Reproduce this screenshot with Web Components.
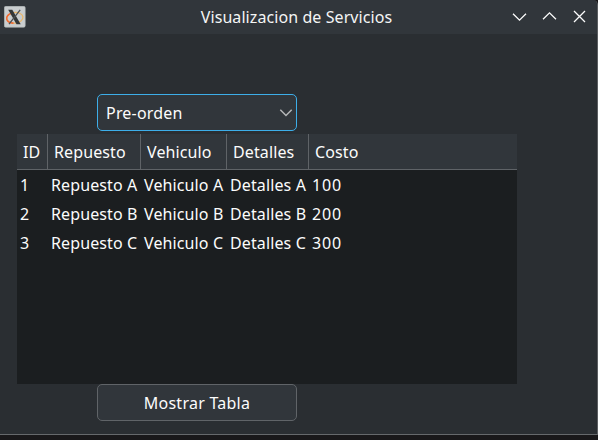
<!DOCTYPE html>
<html lang="es">
<head>
<meta charset="utf-8">
<title>Visualizacion de Servicios</title>
<style>
html, body { margin: 0; height: 100%; overflow: hidden; background: #19181a; }
body { font: 16px/22px "Noto Sans", sans-serif; color: #fcfcfc; }
</style>
</head>
<body>
<app-window>
  <title-bar slot="title">Visualizacion de Servicios</title-bar>
  <combo-box>Pre-orden</combo-box>
  <tree-table></tree-table>
  <push-button>Mostrar Tabla</push-button>
</app-window>
<script>
const define = (name, html) => customElements.define(name, class extends HTMLElement {
  constructor() {
    super();
    this.attachShadow({ mode: 'open' }).innerHTML = html;
  }
});

define('title-bar', `
<style>
:host { display: grid; grid-template-columns: 104px 1fr 104px; align-items: center; height: 34px; background: #31363b; color: #f4f5f5; }
.app { margin-left: 4px; display: block; }
.title { text-align: center; white-space: nowrap; margin-right: 4px; letter-spacing: .08px; }
.buttons { display: flex; justify-content: flex-end; gap: 14px; padding-right: 10px; }
.buttons svg { display: block; fill: none; stroke: #fcfcfc; stroke-width: 1.3; }
</style>
<svg class="app" width="22" height="22" viewBox="0 0 22 22">
  <rect x=".3" y=".3" width="20.9" height="20.9" rx="1.5" fill="#c9cdcf" stroke="#b4b8ba" stroke-width=".6"/>
  <ellipse cx="10.8" cy="11.8" rx="8.200" ry="5.300" fill="none" stroke="#e9b76c" stroke-width="1.3" transform="rotate(-6 10.8 11.8)"/>
  <path d="M8.500 7C4.200 7.900 2 10.600 2.800 13.300C3.600 15.600 6.500 17.200 9.500 17.100" fill="none" stroke="#f06a35" stroke-width="1.600"/>
  <path d="M4.200 3.800H8.300L16.700 18.200H12.500Z" fill="#333739"/>
  <path d="M16.200 3.800L5 18.200" stroke="#4b4f52" stroke-width="1.300"/>
</svg>
<span class="title"><slot></slot></span>
<span class="buttons">
  <svg width="16" height="16"><path d="M2 4.700L8.500 11.200L15 4.700"/></svg>
  <svg width="16" height="16"><path d="M2 10.300L8.500 3.800L15 10.300"/></svg>
  <svg width="16" height="16"><path d="M3 2L14 13M14 2L3 13"/></svg>
</span>`);

define('app-window', `
<style>
:host { display: flex; flex-direction: column; box-sizing: border-box; width: 598px; height: 435px; background: #2a2e32; border-right: 1px solid #5b5e61; border-bottom: 1px solid #66696c; border-top-right-radius: 5px; overflow: hidden; }
.content { display: flex; flex-direction: column; align-items: flex-start; width: 500px; padding: 60px 0 0 17px; }
</style>
<slot name="title"></slot>
<div class="content"><slot></slot></div>`);

define('combo-box', `
<style>
:host { display: flex; align-items: center; justify-content: space-between; box-sizing: border-box; width: 200px; height: 37px; margin: 0 0 3px 80px; padding: 0 3px 0 8px; border: 1px solid #3daee9; border-radius: 5px; background: #31363b; letter-spacing: .2px; }
svg { fill: none; stroke: #b5b7b9; stroke-width: 1.500; }
</style>
<span><slot></slot></span>
<svg width="14" height="14"><path d="M1.300 3.800L7 9.500L12.700 3.800"/></svg>`);

define('push-button', `
<style>
:host { display: flex; align-items: center; justify-content: center; box-sizing: border-box; width: 200px; height: 37px; margin-left: 80px; border: 1px solid #606468; border-radius: 5px; background: #31363b; letter-spacing: .25px; }
</style>
<span><slot></slot></span>`);

const columns = ['ID', 'Repuesto', 'Vehiculo', 'Detalles', 'Costo'];
const rows = [['A', 100], ['B', 200], ['C', 300]].map(([k, cost], i) =>
  [i + 1, 'Repuesto ' + k, 'Vehiculo ' + k, 'Detalles ' + k, cost]);

define('tree-table', `
<style>
:host { display: block; width: 500px; height: 250px; background: #1b1e20; white-space: nowrap; letter-spacing: .12px; }
.row { display: grid; grid-template-columns: 31px 93px 86px 82px 1fr; height: 29px; align-items: center; }
.row span { padding-left: 3px; }
.body span:last-child { letter-spacing: .8px; }
.row.head { height: 35px; align-items: stretch; background: #31363b; border-bottom: 1px solid #5f6367; }
.head span { padding: 7px 0 0 6px; border-right: 1px solid #5f6367; }
.head span:last-child { border-right: 0; }
</style>
<div class="row head">${columns.map(c => `<span>${c}</span>`).join('')}</div>
<div class="body">${rows.map(r => `<div class="row">${r.map(c => `<span>${c}</span>`).join('')}</div>`).join('')}</div>`);
</script>
</body>
</html>
